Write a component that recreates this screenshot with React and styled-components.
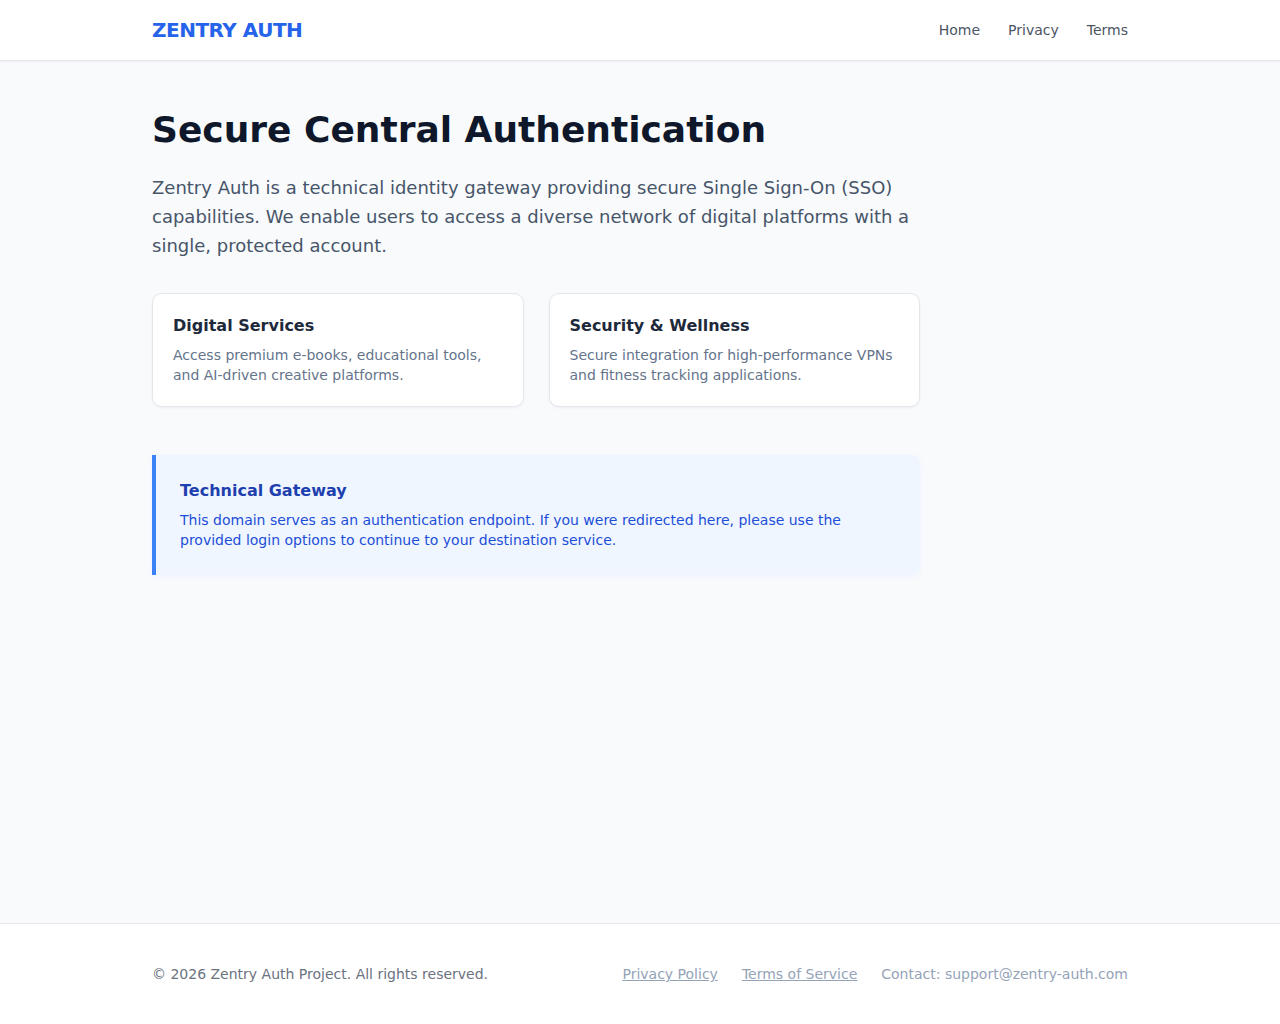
import React from "react";
import styled, { createGlobalStyle } from "styled-components";

const GlobalStyle = createGlobalStyle`
    * { box-sizing: border-box; }
    body {
        margin: 0;
        font-family: "DejaVu Sans", sans-serif;
        background: #f8fafc;
        color: #0f172a;
    }
`;

const Page = styled.div`
    min-height: 100vh;
    display: flex;
    flex-direction: column;
`;

const HeaderBar = styled.header`
    background: #ffffff;
    border-bottom: 1px solid #e5e7eb;
    box-shadow: 0 1px 2px rgba(15, 23, 42, 0.05);
`;

const Container = styled.div`
    max-width: 1024px;
    margin: 0 auto;
    padding: 0 24px;
`;

const HeaderInner = styled(Container)`
    height: 60px;
    display: flex;
    align-items: center;
    justify-content: space-between;
`;

const Logo = styled.a`
    font-size: 20px;
    font-weight: 700;
    letter-spacing: -0.5px;
    color: #2563eb;
    text-decoration: none;
`;

const Nav = styled.nav`
    display: flex;
    gap: 28px;
`;

const NavLink = styled.a`
    font-size: 14px;
    color: #4b5563;
    text-decoration: none;
`;

const Main = styled.main`
    flex: 1;
`;

const Content = styled(Container)`
    padding-top: 47px;
    padding-bottom: 48px;
`;

const Inner = styled.div`
    max-width: 768px;
`;

const Title = styled.h1`
    margin: 0 0 22px;
    font-size: 36px;
    line-height: 1.2;
    font-weight: 700;
    color: #0f172a;
`;

const Lead = styled.p`
    margin: 0 0 33px;
    font-size: 18px;
    line-height: 29px;
    color: #475569;
`;

const CardGrid = styled.div`
    display: grid;
    grid-template-columns: 1fr 1fr;
    gap: 25px;
    margin-bottom: 48px;
`;

const Card = styled.div`
    background: #ffffff;
    border: 1px solid #e5e7eb;
    border-radius: 10px;
    padding: 20px 20px 21px;
    box-shadow: 0 1px 3px rgba(15, 23, 42, 0.05);
`;

const CardTitle = styled.h3`
    margin: 0 0 7px;
    font-size: 16px;
    line-height: 24px;
    font-weight: 700;
    color: #1e293b;
`;

const CardText = styled.p`
    margin: 0;
    font-size: 14px;
    line-height: 20px;
    color: #64748b;
`;

const Notice = styled.div`
    background: #eff6ff;
    border-left: 4px solid #3b82f6;
    border-radius: 0 8px 8px 0;
    padding: 24px 24px 25px;
    box-shadow: 0 2px 6px rgba(59, 130, 246, 0.04);
`;

const NoticeTitle = styled.h3`
    margin: 0 0 7px;
    font-size: 16px;
    line-height: 24px;
    font-weight: 700;
    color: #1e40af;
`;

const NoticeText = styled.p`
    margin: 0;
    font-size: 14px;
    line-height: 20px;
    color: #1d4ed8;
`;

const FooterBar = styled.footer`
    background: #ffffff;
    border-top: 1px solid #e5e7eb;
`;

const FooterInner = styled(Container)`
    height: 100px;
    display: flex;
    align-items: center;
    justify-content: space-between;
    font-size: 14px;
`;

const Copy = styled.span`
    color: #6b7280;
`;

const FooterLinks = styled.div`
    display: flex;
    gap: 24px;
    color: #94a3b8;
`;

const FooterLink = styled.a`
    color: #94a3b8;
    text-decoration: underline;
`;

const cards = [
    {
        title: "Digital Services",
        text: "Access premium e-books, educational tools, and AI-driven creative platforms."
    },
    {
        title: "Security & Wellness",
        text: "Secure integration for high-performance VPNs and fitness tracking applications."
    }
];

export default function App() {
    return (
        <>
            <GlobalStyle />
            <Page>
                <HeaderBar>
                    <HeaderInner>
                        <Logo href="#">ZENTRY AUTH</Logo>
                        <Nav>
                            <NavLink href="#">Home</NavLink>
                            <NavLink href="#">Privacy</NavLink>
                            <NavLink href="#">Terms</NavLink>
                        </Nav>
                    </HeaderInner>
                </HeaderBar>
                <Main>
                    <Content>
                        <Inner>
                            <Title>Secure Central Authentication</Title>
                            <Lead>
                                Zentry Auth is a technical identity gateway providing secure Single Sign-On (SSO)
                                capabilities. We enable users to access a diverse network of digital platforms with a
                                single, protected account.
                            </Lead>
                            <CardGrid>
                                {cards.map(card => (
                                    <Card key={card.title}>
                                        <CardTitle>{card.title}</CardTitle>
                                        <CardText>{card.text}</CardText>
                                    </Card>
                                ))}
                            </CardGrid>
                            <Notice>
                                <NoticeTitle>Technical Gateway</NoticeTitle>
                                <NoticeText>
                                    This domain serves as an authentication endpoint. If you were redirected here,
                                    please use the provided login options to continue to your destination service.
                                </NoticeText>
                            </Notice>
                        </Inner>
                    </Content>
                </Main>
                <FooterBar>
                    <FooterInner>
                        <Copy>© 2026 Zentry Auth Project. All rights reserved.</Copy>
                        <FooterLinks>
                            <FooterLink href="#">Privacy Policy</FooterLink>
                            <FooterLink href="#">Terms of Service</FooterLink>
                            <span>Contact: support@zentry-auth.com</span>
                        </FooterLinks>
                    </FooterInner>
                </FooterBar>
            </Page>
        </>
    );
}
